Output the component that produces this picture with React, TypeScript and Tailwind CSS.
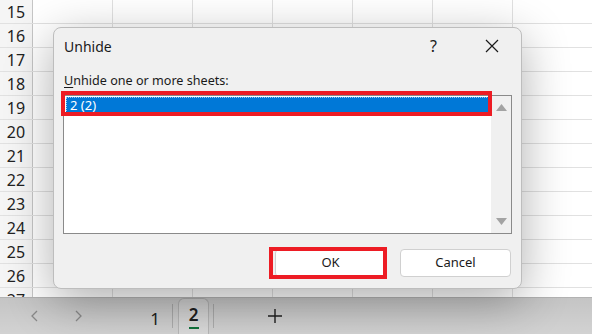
import React from "react";

const rows = [15, 16, 17, 18, 19, 20, 21, 22, 23, 24, 25, 26, 27];
const cols = [0, 1, 2, 3, 4, 5, 6];

export default function App() {
  return (
    <div
      className="relative w-[592px] h-[334px] overflow-hidden bg-white"
      style={{ fontFamily: '"Noto Sans", "Open Sans", sans-serif' }}
    >
      {/* sheet grid */}
      <div className="flex flex-col h-[297px] overflow-hidden">
        {rows.map((r) => (
          <div key={r} className="flex h-[24px] shrink-0 border-b border-[#e1e1e1]">
            <div className="w-[33px] shrink-0 bg-[#f5f5f5] border-r border-[#c6c6c6] flex items-center justify-center text-[16px] text-[#222] leading-none">
              {r}
            </div>
            {cols.map((c) => (
              <div key={c} className="w-[80px] shrink-0 border-r border-[#e1e1e1]" />
            ))}
          </div>
        ))}
      </div>

      {/* tab bar */}
      <div className="h-[37px] bg-[#e4e4e4] border-t border-[#cfcfcf] flex items-center text-[#222]">
        <div className="w-[70px] pl-[29px] flex items-center">
          <svg width="12" height="14" viewBox="0 0 12 14">
            <path d="M8 2 L3 7 L8 12" fill="none" stroke="#9a9a9a" strokeWidth="1.3" />
          </svg>
        </div>
        <div className="w-[40px] pl-[2px] flex items-center">
          <svg width="12" height="14" viewBox="0 0 12 14">
            <path d="M4 2 L9 7 L4 12" fill="none" stroke="#9a9a9a" strokeWidth="1.3" />
          </svg>
        </div>
        <div className="w-[62px] flex justify-end pr-[12px] pt-[4px] text-[17px] leading-none">1</div>
        <div className="w-px h-[24px] bg-[#bdbdbd]" />
        <div className="ml-[5px] w-[31px] h-[36px] self-end bg-[#ededed] rounded-t-[6px] border border-b-0 border-[#c8c8c8] flex flex-col items-center justify-center">
          <span className="text-[17px] leading-none font-semibold text-[#222] mt-[2px]">2</span>
          <span className="w-[10px] h-[2px] bg-[#107c41] mt-[4px]" />
        </div>
        <div className="ml-[4px] w-px h-[24px] bg-[#bdbdbd]" />
        <div className="ml-[53px] flex items-center">
          <svg width="16" height="16" viewBox="0 0 16 16">
            <path d="M8 1 V15 M1 8 H15" stroke="#222" strokeWidth="1.4" />
          </svg>
        </div>
      </div>

      {/* dim shadow overlay on the tab bar */}
      <div className="absolute left-0 right-0 top-[297px] bottom-0 bg-gradient-to-b from-[rgba(0,0,0,0.14)] to-[rgba(0,0,0,0.08)] pointer-events-none" />

      {/* dialog */}
      <div className="absolute left-[53px] top-[27px] w-[469px] h-[262px] bg-[#f0f0f0] rounded-[8px] border border-[#bdbdbd] shadow-[0_12px_48px_rgba(0,0,0,0.32)] text-[13px] text-[#1a1a1a]">
        <div className="flex items-center h-[36px] pl-[10px]">
          <span className="text-[14px]">Unhide</span>
          <span className="ml-auto mr-[48px] text-[16px]">?</span>
          <svg className="mr-[22px]" width="14" height="14" viewBox="0 0 14 14">
            <path d="M1 1 L13 13 M13 1 L1 13" stroke="#1a1a1a" strokeWidth="1.2" />
          </svg>
        </div>
        <div className="pl-[10px] mt-[7px] h-[20px] leading-[20px] text-[12.6px]">
          <span className="underline underline-offset-2">U</span>nhide one or more sheets:
        </div>
        <div className="ml-[9px] mt-[4px] w-[449px] h-[139px] border border-[#8a8a8a] bg-white flex">
          <div className="flex-1 p-[1px]">
            <div className="h-[16px] bg-[#0078d7] text-white leading-[15px] pl-[3px] border border-dotted border-[#9cc8f0] mx-[1px]">
              2 (2)
            </div>
          </div>
          <div className="w-[20px] bg-[#f0f0f0] flex flex-col items-center justify-between py-[7px]">
            <svg width="11" height="8" viewBox="0 0 11 8">
              <path d="M0 8 L5.5 1 L11 8 Z" fill="#a3a3a3" />
            </svg>
            <svg width="11" height="8" viewBox="0 0 11 8">
              <path d="M0 0 L5.5 7 L11 0 Z" fill="#a3a3a3" />
            </svg>
          </div>
        </div>
        <div className="flex justify-end gap-[14px] mr-[10px] mt-[15px]">
          <button className="w-[111px] h-[28px] bg-white rounded-[4px] border border-[#d0d0d0] text-[13px]">
            OK
          </button>
          <button className="w-[111px] h-[28px] bg-white rounded-[4px] border border-[#d0d0d0] text-[13px]">
            Cancel
          </button>
        </div>
      </div>

      {/* red annotation boxes */}
      <div className="absolute left-[61px] top-[91px] w-[431px] h-[25px] border-[4px] border-[#ed1c24] pointer-events-none" />
      <div className="absolute left-[269px] top-[247px] w-[118px] h-[32px] border-[4px] border-[#ed1c24] pointer-events-none" />
    </div>
  );
}
